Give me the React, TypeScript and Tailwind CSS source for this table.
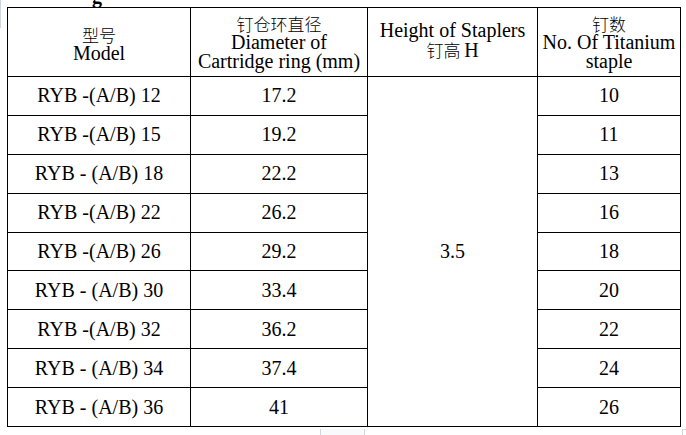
import React from "react";

const rows = [
  { model: "RYB -(A/B) 12", dia: "17.2", count: "10" },
  { model: "RYB -(A/B) 15", dia: "19.2", count: "11" },
  { model: "RYB - (A/B) 18", dia: "22.2", count: "13" },
  { model: "RYB -(A/B) 22", dia: "26.2", count: "16" },
  { model: "RYB -(A/B) 26", dia: "29.2", count: "18" },
  { model: "RYB - (A/B) 30", dia: "33.4", count: "20" },
  { model: "RYB -(A/B) 32", dia: "36.2", count: "22" },
  { model: "RYB - (A/B) 34", dia: "37.4", count: "24" },
  { model: "RYB - (A/B) 36", dia: "41", count: "26" },
];

const cjk = "font-[family-name:Noto_Sans_CJK_SC,sans-serif] font-light text-[17px] leading-[19px]";

export default function App() {
  return (
    <div className="relative w-[686px] h-[435px] bg-white overflow-hidden font-[family-name:Liberation_Serif,serif] text-black">
      {/* cut-off heading above table */}
      <div className="absolute left-[92px] -top-[14px] text-[20px] font-bold leading-none">g</div>
      <div className="absolute left-0 top-0 w-px h-[28px] bg-gray-300" />

      <div className="pt-[7px] pl-[7px]">
        <table className="border-collapse text-[20px] leading-[19px] text-center">
          <colgroup>
            <col className="w-[183px]" />
            <col className="w-[177px]" />
            <col className="w-[170px]" />
            <col className="w-[143px]" />
          </colgroup>
          <thead>
            <tr className="h-[69px]">
              <th className="border border-black font-normal align-middle pt-[3px]">
                <div className={cjk}>型号</div>
                <div>Model</div>
              </th>
              <th className="border border-black font-normal align-middle">
                <div className={cjk}>钉仓环直径</div>
                <div>Diameter of</div>
                <div>Cartridge ring (mm)</div>
              </th>
              <th className="border border-black font-normal align-middle pb-[4px]">
                <div>Height of Staplers</div>
                <div className={cjk}>
                  钉高 <span className="font-[family-name:Liberation_Serif,serif] font-normal text-[20px]">H</span>
                </div>
              </th>
              <th className="border border-black font-normal align-middle">
                <div className={cjk}>钉数</div>
                <div>No. Of Titanium</div>
                <div>staple</div>
              </th>
            </tr>
          </thead>
          <tbody>
            {rows.map((r, i) => (
              <tr key={r.model} className="h-[38.9px]">
                <td className="border border-black">{r.model}</td>
                <td className="border border-black">{r.dia}</td>
                {i === 0 && (
                  <td rowSpan={9} className="border border-black">
                    3.5
                  </td>
                )}
                <td className="border border-black">{r.count}</td>
              </tr>
            ))}
          </tbody>
        </table>
      </div>

      {/* faint scrollbar ghosts under the table */}
      <div className="absolute left-[320px] top-[429px] w-[45px] h-[8px] border-x border-gray-300 bg-gray-50" />
      <div className="absolute left-[682px] top-[429px] w-[4px] h-[8px] border-l border-t border-gray-300" />
    </div>
  );
}
